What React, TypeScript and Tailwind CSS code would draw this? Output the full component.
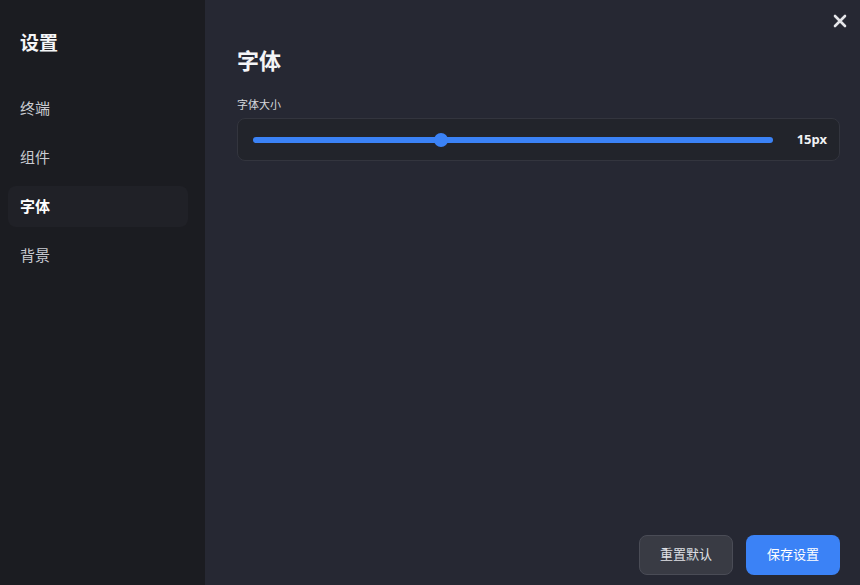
import { useState } from "react";

const navItems = ["终端", "组件", "字体", "背景"];

function FontSlider({ value, min, max }: { value: number; min: number; max: number }) {
  const pct = (value - min) / (max - min);
  return (
    <div className="flex items-center h-[43px] rounded-lg border border-[#33353e] bg-[#22242b] pl-[15px] pr-[12px]">
      <div className="relative flex-1 h-[14px] flex items-center">
        <div className="w-full h-[6px] rounded-full bg-[#3b82f6]" />
        <div
          className="absolute top-0 w-[14px] h-[14px] rounded-full bg-[#3b82f6]"
          style={{ left: `calc((100% - 14px) * ${pct})` }}
        />
      </div>
      <span className="ml-[24px] text-[13px] font-bold text-[#f1f2f4]">{value}px</span>
    </div>
  );
}

export default function App() {
  const [active, setActive] = useState("字体");

  return (
    <div
      className="flex w-[860px] h-[585px] overflow-hidden bg-[#262833] text-white"
      style={{ fontFamily: '"Noto Sans", "Noto Sans CJK SC", sans-serif' }}
    >
      <aside className="w-[205px] shrink-0 bg-[#1b1c21] px-2 pt-[30px]">
        <h1 className="px-3 text-[19px] font-bold leading-[26px] text-[#f4f5f7]">设置</h1>
        <nav className="mt-[32px] flex flex-col gap-[8px] w-[180px]">
          {navItems.map((item) => (
            <button
              key={item}
              onClick={() => setActive(item)}
              className={
                item === active
                  ? "h-[41px] rounded-lg bg-[#202127] px-3 text-left text-[15px] font-bold text-white"
                  : "h-[41px] rounded-lg px-3 text-left text-[15px] text-[#c9cbd1]"
              }
            >
              {item}
            </button>
          ))}
        </nav>
      </aside>

      <main className="relative flex-1 flex flex-col pl-8 pr-[20px] pb-[10px]">
        <button className="absolute right-[13px] top-[14px] text-[#e5e6ea]">
          <svg width="14" height="14" viewBox="0 0 14 14">
            <path d="M2 2L12 12M12 2L2 12" stroke="currentColor" strokeWidth="2.6" strokeLinecap="round" />
          </svg>
        </button>

        <div className="flex-1 pt-[45px]">
          <h2 className="text-[22px] font-bold leading-[30px] text-[#f4f5f7]">字体</h2>
          <div className="mt-[22px]">
            <label className="block text-[11px] leading-[16px] text-[#d6d8dd]">字体大小</label>
            <div className="mt-[5px]">
              <FontSlider value={15} min={10} max={24} />
            </div>
          </div>
        </div>

        <div className="flex justify-end gap-[13px]">
          <button className="h-[40px] w-[94px] rounded-lg border border-[#4a4c56] bg-[#393b44] text-[13px] text-[#dfe0e4]">
            重置默认
          </button>
          <button className="h-[40px] w-[94px] rounded-lg bg-[#3b82f6] text-[13px] text-white">
            保存设置
          </button>
        </div>
      </main>
    </div>
  );
}
